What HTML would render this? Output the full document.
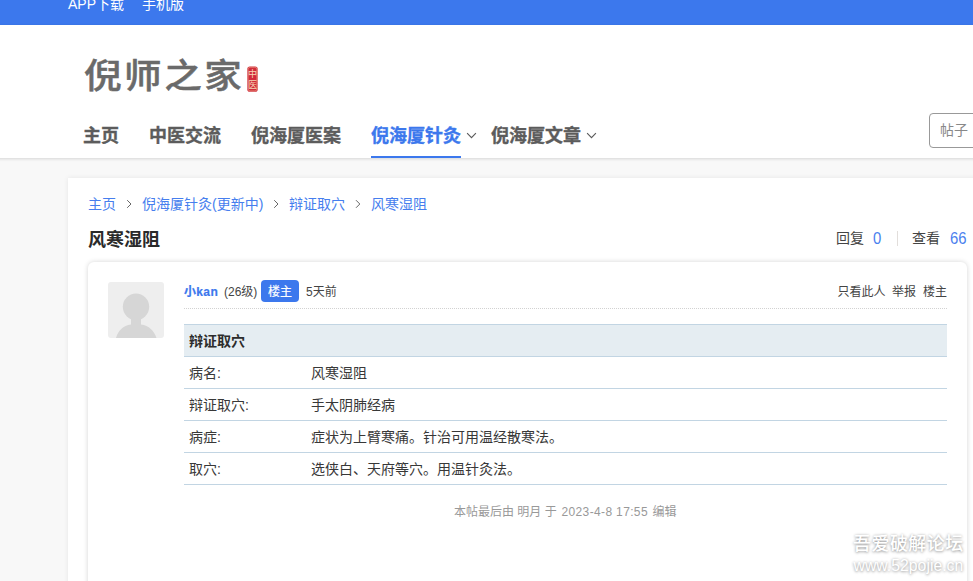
<!DOCTYPE html>
<html lang="zh-CN">
<head>
<meta charset="utf-8">
<title>风寒湿阻</title>
<style>
*{box-sizing:border-box;margin:0;padding:0}
html,body{width:973px;height:581px;overflow:hidden}
body{background:#f8f8f8;font-family:"Liberation Sans","Noto Sans CJK SC",sans-serif;color:#333;position:relative}
a{text-decoration:none;color:inherit}
.topbar{position:absolute;left:0;top:0;width:973px;height:25px;background:#3c78ed;color:#fff;font-size:14px}
.topbar span{position:absolute;top:-6px;line-height:20px;white-space:nowrap}
.header{position:absolute;left:-10px;top:25px;width:1000px;height:133px;background:#fff;box-shadow:0 1px 3px rgba(0,0,0,.14)}
.logo{position:absolute;left:84px;top:51.5px;font-size:37px;font-weight:500;-webkit-text-stroke:.5px #6a6a6a;line-height:50px;color:#6a6a6a;letter-spacing:2.5px;transform:scale(1.015,.92);transform-origin:0 50%;white-space:nowrap}
.stamp{position:absolute;left:247px;top:66px;width:11px;height:26px}
.nav{position:absolute;top:122.5px;font-size:18px;font-weight:bold;color:#5c5c5c;-webkit-text-stroke:.35px currentColor;line-height:26px;white-space:nowrap}
.nav.on{color:#3c78ed}
.navline{position:absolute;left:371px;top:156px;width:90px;height:2px;background:#3c78ed}
.chev{position:absolute;top:131px;width:11px;height:8px}
.search{position:absolute;left:929px;top:113px;width:60px;height:35px;border:1px solid #999;border-radius:4px;background:#fff;font-size:14px;color:#888;line-height:33px;padding-left:10px}
.main{position:absolute;left:68px;top:178px;width:920px;height:420px;background:#fff;box-shadow:0 0 5px rgba(0,0,0,.08)}
.crumb{position:absolute;top:194px;font-size:14px;line-height:20px;color:#467eee;white-space:nowrap}
.crumb.sep{color:#888}
.title{position:absolute;left:88px;top:226.5px;font-size:18px;font-weight:bold;color:#2a2a2a;line-height:26px}
.stat{position:absolute;top:228px;font-size:14px;line-height:20px;color:#444;white-space:nowrap}
.stat.n{color:#4a80ee;font-size:16.5px;transform:scaleX(.9);transform-origin:0 50%}
.vbar{position:absolute;left:897px;top:231px;width:1px;height:15px;background:#e2dedb}
.post{position:absolute;left:88px;top:262px;width:879px;height:340px;background:#fff;border-radius:6px;box-shadow:0 0 5px rgba(0,0,0,.17)}
.avatar{position:absolute;left:108px;top:282px;width:56px;height:56px;border-radius:3px;background:#eee;overflow:hidden}
.meta{position:absolute;top:282px;font-size:12px;line-height:20px;white-space:nowrap;color:#444}
.badge{position:absolute;left:261px;top:280px;width:38px;height:22px;border-radius:4px;background:#3c78ed;color:#fff;font-size:12px;line-height:25px;text-align:center;-webkit-text-stroke:.2px #fff}
.dot{position:absolute;left:184px;top:308px;width:763px;height:0;border-top:1px dotted #d2d2d2}
.tbl{position:absolute;left:184px;top:324px;width:763px}
.th{height:33px;background:#e5edf2;border-top:1px solid #c2d5e3;border-bottom:1px solid #c2d5e3;font-size:14px;font-weight:bold;color:#2c2c2c;line-height:32px;padding-left:5px}
.tr{height:32px;border-bottom:1px solid #c2d5e3;font-size:14px;line-height:32px;color:#383838;position:relative;white-space:nowrap}
.tr b{font-weight:normal;position:absolute;left:5px}
.tr i{font-style:normal;position:absolute;left:127px}
.edit{position:absolute;left:454px;top:502px;font-size:12px;color:#999;line-height:20px;white-space:nowrap}
.wm{position:absolute;color:#fff;white-space:nowrap;text-shadow:0 1px 3px rgba(0,0,0,.3),0 0 3px rgba(0,0,0,.22)}
</style>
</head>
<body>
<div class="topbar"><span style="left:68px">APP下载</span><span style="left:142px">手机版</span></div>
<div class="header"></div>
<div class="logo">倪师之家</div>
<svg class="stamp" viewBox="0 0 11 26"><rect x="0.3" y="0.4" width="10.4" height="25.4" rx="2.6" fill="#d12b3b"/><rect x="1.1" y="1.3" width="8.8" height="23.6" rx="2" fill="none" stroke="#eebf97" stroke-width=".5"/><text x="5.5" y="11" font-size="9" fill="#f5d6b4" text-anchor="middle" font-family="Noto Sans CJK SC, sans-serif">中</text><text x="5.5" y="22" font-size="9" fill="#f5d6b4" text-anchor="middle" font-family="Noto Sans CJK SC, sans-serif">医</text></svg>
<div class="nav" style="left:83px">主页</div>
<div class="nav" style="left:149px">中医交流</div>
<div class="nav" style="left:251px">倪海厦医案</div>
<div class="nav on" style="left:371px">倪海厦针灸</div>
<div class="nav" style="left:491px">倪海厦文章</div>
<svg class="chev" style="left:466px" viewBox="0 0 11 8"><path d="M1.1 2.2 L5.5 6.7 L9.9 2.2" fill="none" stroke="#5a5a5a" stroke-width="1.1"/></svg>
<svg class="chev" style="left:586px" viewBox="0 0 11 8"><path d="M1.1 2.2 L5.5 6.7 L9.9 2.2" fill="none" stroke="#5a5a5a" stroke-width="1.1"/></svg>
<div class="navline"></div>
<div class="search">帖子</div>
<div class="main"></div>
<div class="crumb" style="left:88px">主页</div>
<div class="crumb" style="left:142px">倪海厦针灸(更新中)</div>
<div class="crumb" style="left:289px">辩证取穴</div>
<div class="crumb" style="left:371px">风寒湿阻</div>
<svg style="position:absolute;left:120px;top:196px" width="260" height="16" viewBox="0 0 260 16"><g fill="none" stroke="#666" stroke-width="1"><path d="M7.2 4.2 L11 8 L7.2 11.8"/><path d="M154.2 4.2 L158 8 L154.2 11.8"/><path d="M236 4.2 L239.8 8 L236 11.8"/></g></svg>
<div class="title">风寒湿阻</div>
<div class="stat" style="left:836px">回复</div>
<div class="stat n" style="left:872.8px;top:227.6px">0</div>
<div class="vbar"></div>
<div class="stat" style="left:912px">查看</div>
<div class="stat n" style="left:950px;top:227.6px">66</div>
<div class="post"></div>
<div class="avatar"><svg width="56" height="56" viewBox="0 0 56 56"><circle cx="28" cy="24.8" r="13.2" fill="#d6d6d6"/><path d="M8 56 C10 49 15 43.5 23 42.6 L23 36 L33 36 L33 42.6 C41 43.5 46 49 48.5 56 Z" fill="#d6d6d6"/></svg></div>
<div class="meta" style="left:184px;color:#3c78ed;font-weight:bold;letter-spacing:.35px;-webkit-text-stroke:.2px #3c78ed">小kan</div>
<div class="meta" style="left:224px">(26级)</div>
<div class="badge">楼主</div>
<div class="meta" style="left:306px">5天前</div>
<div class="meta" style="left:837.5px">只看此人</div>
<div class="meta" style="left:892px">举报</div>
<div class="meta" style="left:923px">楼主</div>
<div class="dot"></div>
<div class="tbl">
<div class="th">辩证取穴</div>
<div class="tr"><b>病名:</b><i>风寒湿阻</i></div>
<div class="tr"><b>辩证取穴:</b><i>手太阴肺经病</i></div>
<div class="tr"><b>病症:</b><i>症状为上臂寒痛。针治可用温经散寒法。</i></div>
<div class="tr"><b>取穴:</b><i>选侠白、天府等穴。用温针灸法。</i></div>
</div>
<div class="edit">本帖最后由 明月 于</div><div class="edit" style="left:561.5px;letter-spacing:.36px">2023-4-8 17:55</div><div class="edit" style="left:652.5px">编辑</div>
<div class="wm" style="left:853px;top:532px;font-size:18px;font-weight:500;line-height:24px;letter-spacing:.45px">吾爱破解论坛</div>
<div class="wm" style="left:853.5px;top:556px;font-size:15.8px;line-height:20px">www.52pojie.cn</div>
</body>
</html>
